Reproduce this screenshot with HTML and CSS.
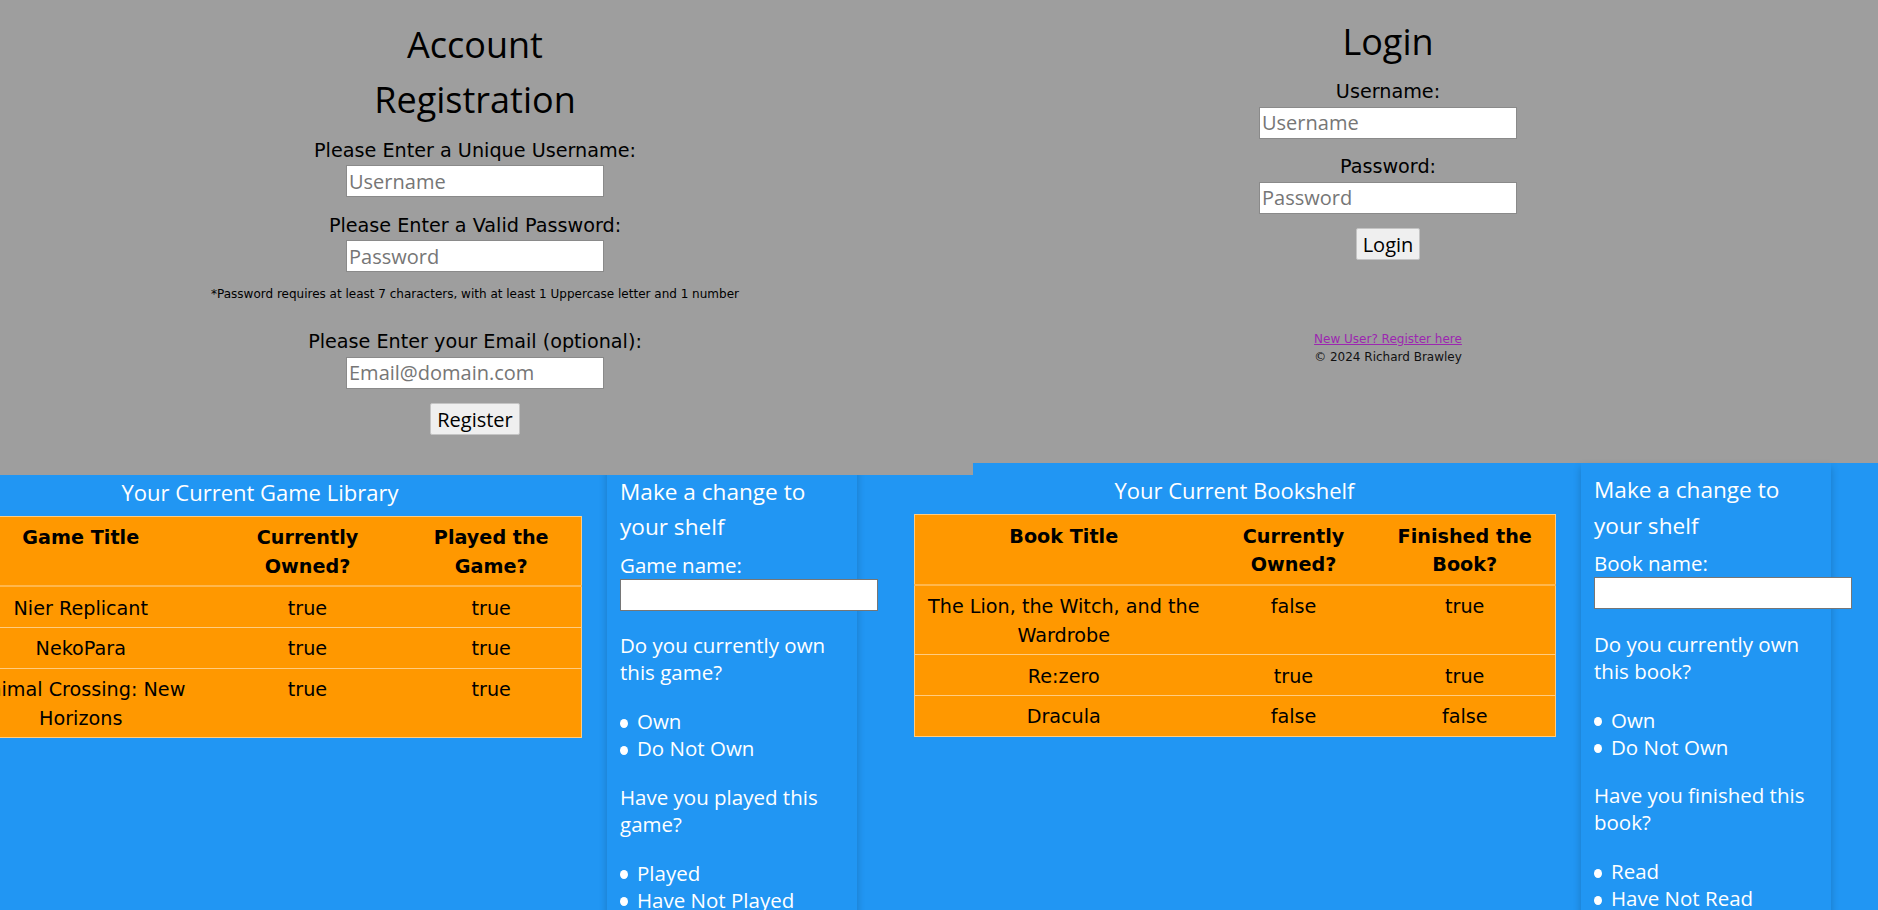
FILE: index.html
```html
<!DOCTYPE html>
<html lang="en">
<head>
<meta charset="utf-8">
<title>My Shelf</title>
<link rel="stylesheet" href="styles.css">
</head>
<body>
<div class="top">
  <section class="auth auth-register">
    <h1 class="auth-title">Account Registration</h1>
    <form class="auth-form">
      <label class="auth-label" for="reg-user">Please Enter a Unique Username:</label>
      <input class="auth-input" id="reg-user" type="text" placeholder="Username">
      <label class="auth-label" for="reg-pass">Please Enter a Valid Password:</label>
      <input class="auth-input" id="reg-pass" type="password" placeholder="Password">
      <p class="auth-note">*Password requires at least 7 characters, with at least 1 Uppercase letter and 1 number</p>
      <label class="auth-label" for="reg-mail">Please Enter your Email (optional):</label>
      <input class="auth-input" id="reg-mail" type="text" placeholder="Email@domain.com">
      <button class="auth-btn" type="button">Register</button>
    </form>
  </section>
  <section class="auth auth-login">
    <h1 class="auth-title">Login</h1>
    <form class="auth-form">
      <label class="auth-label" for="log-user">Username:</label>
      <input class="auth-input" id="log-user" type="text" placeholder="Username">
      <label class="auth-label" for="log-pass">Password:</label>
      <input class="auth-input" id="log-pass" type="password" placeholder="Password">
      <button class="auth-btn" type="button">Login</button>
    </form>
    <footer class="auth-footer">
      <a class="auth-link" href="#register">New User? Register here</a>
      <div class="copyright">© 2024 Richard Brawley</div>
    </footer>
  </section>
</div>

<div class="shelves">
  <div class="shelf shelf-games">
    <div class="library library-games">
      <h2 class="library-title">Your Current Game Library</h2>
      <table class="library-table">
        <colgroup><col class="c1"><col class="c2"><col class="c3"></colgroup>
        <thead>
          <tr><th>Game Title</th><th>Currently Owned?</th><th>Played the Game?</th></tr>
        </thead>
        <tbody>
          <tr><td>Nier Replicant</td><td>true</td><td>true</td></tr>
          <tr><td>NekoPara</td><td>true</td><td>true</td></tr>
          <tr><td>Animal Crossing: New Horizons</td><td>true</td><td>true</td></tr>
        </tbody>
      </table>
    </div>
    <form class="editor">
      <h3 class="editor-title">Make a change to your shelf</h3>
      <label class="editor-label" for="game-name">Game name:</label>
      <input class="editor-input" id="game-name" type="text">
      <p class="editor-q">Do you currently own this game?</p>
      <ul class="opts">
        <li class="opt">Own</li>
        <li class="opt">Do Not Own</li>
      </ul>
      <p class="editor-q">Have you played this game?</p>
      <ul class="opts">
        <li class="opt">Played</li>
        <li class="opt">Have Not Played</li>
      </ul>
    </form>
  </div>

  <div class="shelf shelf-books">
    <div class="library library-books">
      <h2 class="library-title">Your Current Bookshelf</h2>
      <table class="library-table">
        <colgroup><col class="c1"><col class="c2"><col class="c3"></colgroup>
        <thead>
          <tr><th>Book Title</th><th>Currently Owned?</th><th>Finished the Book?</th></tr>
        </thead>
        <tbody>
          <tr><td>The Lion, the Witch, and the Wardrobe</td><td>false</td><td>true</td></tr>
          <tr><td>Re:zero</td><td>true</td><td>true</td></tr>
          <tr><td>Dracula</td><td>false</td><td>false</td></tr>
        </tbody>
      </table>
    </div>
    <form class="editor">
      <h3 class="editor-title">Make a change to your shelf</h3>
      <label class="editor-label" for="book-name">Book name:</label>
      <input class="editor-input" id="book-name" type="text">
      <p class="editor-q">Do you currently own this book?</p>
      <ul class="opts">
        <li class="opt">Own</li>
        <li class="opt">Do Not Own</li>
      </ul>
      <p class="editor-q">Have you finished this book?</p>
      <ul class="opts">
        <li class="opt">Read</li>
        <li class="opt">Have Not Read</li>
      </ul>
    </form>
  </div>
</div>
</body>
</html>
```

FILE: styles.css
```css
html, body {
  height: 100%;
  overflow: hidden;
}

body {
  margin: 0;
  background: #2196f3;
  font-family: "DejaVu Sans", Verdana, sans-serif;
  font-size: 19.2px;
  color: #000;
}

/* ---------- top: auth panels ---------- */
.top {
  display: flex;
  align-items: flex-start;
}

.auth {
  box-sizing: border-box;
  background: #9e9e9e;
  text-align: center;
  flex: none;
}

.auth-register {
  width: 973px;
  height: 475px;
  margin-bottom: -12px;
  padding: 17px 23px 0 0;
  position: relative;
  z-index: 1;
}

.auth-login {
  width: 905px;
  height: 463px;
  padding: 13.5px 75px 0 0;
}

.auth-title {
  font-family: "Open Sans", "Noto Sans", sans-serif;
  font-weight: 400;
  font-size: 36px;
  line-height: 55px;
  max-width: 320px;
  margin: 0 auto 9.5px;
}

.auth-form {
  margin: 0;
}

.auth-label {
  display: block;
  line-height: 28.8px;
}

.auth-input {
  display: block;
  box-sizing: border-box;
  width: 258px;
  height: 32px;
  margin: 0 auto 14.4px;
  padding: 0 2px;
  border: 1px solid #8a8a8a;
  background: #fff;
  font-family: "Open Sans", "Noto Sans", sans-serif;
  font-size: 20px;
  color: #000;
}

.auth-input::placeholder {
  color: #767676;
}

.auth-note {
  font-size: 12px;
  line-height: 14px;
  margin: 0 0 27px;
}

.auth-btn {
  display: block;
  margin: 0 auto;
  height: 32px;
  padding: 0 6px;
  background: #efefef;
  border: 1px solid #c4c4c4;
  border-radius: 2px;
  font-family: "Open Sans", "Noto Sans", sans-serif;
  font-size: 20px;
  color: #000;
}

.auth-footer {
  margin-top: 70px;
  font-size: 12px;
  line-height: 18px;
}

.auth-link {
  color: #9c27b0;
}

.copyright {
  color: #111;
}

/* ---------- bottom: shelves ---------- */
.shelves {
  display: flex;
  align-items: flex-start;
  gap: 57px;
  margin-left: -53px;
}

.shelf {
  display: flex;
  align-items: flex-start;
  gap: 26px;
  flex: none;
}

.shelf-games {
  margin-top: 1.5px;
}

.library {
  padding-top: 12px;
  flex: none;
}

.library-games { width: 634px; }
.library-books { width: 641px; }

.library-title {
  margin: 0 0 9px;
  font-family: "Open Sans", "Noto Sans", sans-serif;
  font-weight: 400;
  font-size: 22px;
  line-height: 30px;
  color: #fff;
  text-align: center;
}

.library-games .library-title {
  margin-right: 8px;
}

.library-table {
  width: 100%;
  table-layout: fixed;
  border-collapse: collapse;
  background: #ff9800;
  border: 1px solid #ffcc80;
  line-height: 28.8px;
}

.library-games .c1 { width: 266px; }
.library-games .c2 { width: 188px; }
.library-games .c3 { width: 180px; }

.library-books .c1 { width: 298px; }
.library-books .c2 { width: 162px; }
.library-books .c3 { width: 181px; }

.library-table th,
.library-table td {
  padding: 7.5px 8px 3.5px;
  text-align: center;
  vertical-align: top;
  border-bottom: 1px solid #ffcc80;
}

.library-table th {
  font-weight: bold;
  border-bottom: 2px solid #ffb74d;
}

/* ---------- editor panel ---------- */
.editor {
  width: 250px;
  min-height: 520px;
  box-sizing: border-box;
  flex: none;
  padding: 9px 13px 40px;
  background: #2196f3;
  box-shadow: 0 4px 8px rgba(0, 0, 0, 0.2);
  color: #fff;
  font-family: "Open Sans", "Noto Sans", sans-serif;
  font-size: 20.5px;
}

.editor-title {
  margin: 0 0 7px;
  font-weight: 400;
  font-size: 22.6px;
  line-height: 35.5px;
}

.editor-label {
  display: block;
  line-height: 27px;
}

.editor-input {
  display: block;
  box-sizing: border-box;
  width: 258px;
  height: 32px;
  margin: 0;
  border: 1px solid #767676;
  background: #fff;
}

.editor-q {
  margin: 21.5px 0 22px;
  line-height: 27px;
}

.opts {
  list-style: none;
  margin: 0;
  padding: 0;
  line-height: 27px;
}

.opt {
  display: flex;
  align-items: center;
}

.opt::before {
  content: "";
  width: 8px;
  height: 9px;
  margin: 3px 9px 0 0;
  border-radius: 50%;
  background: #fff;
}
```
